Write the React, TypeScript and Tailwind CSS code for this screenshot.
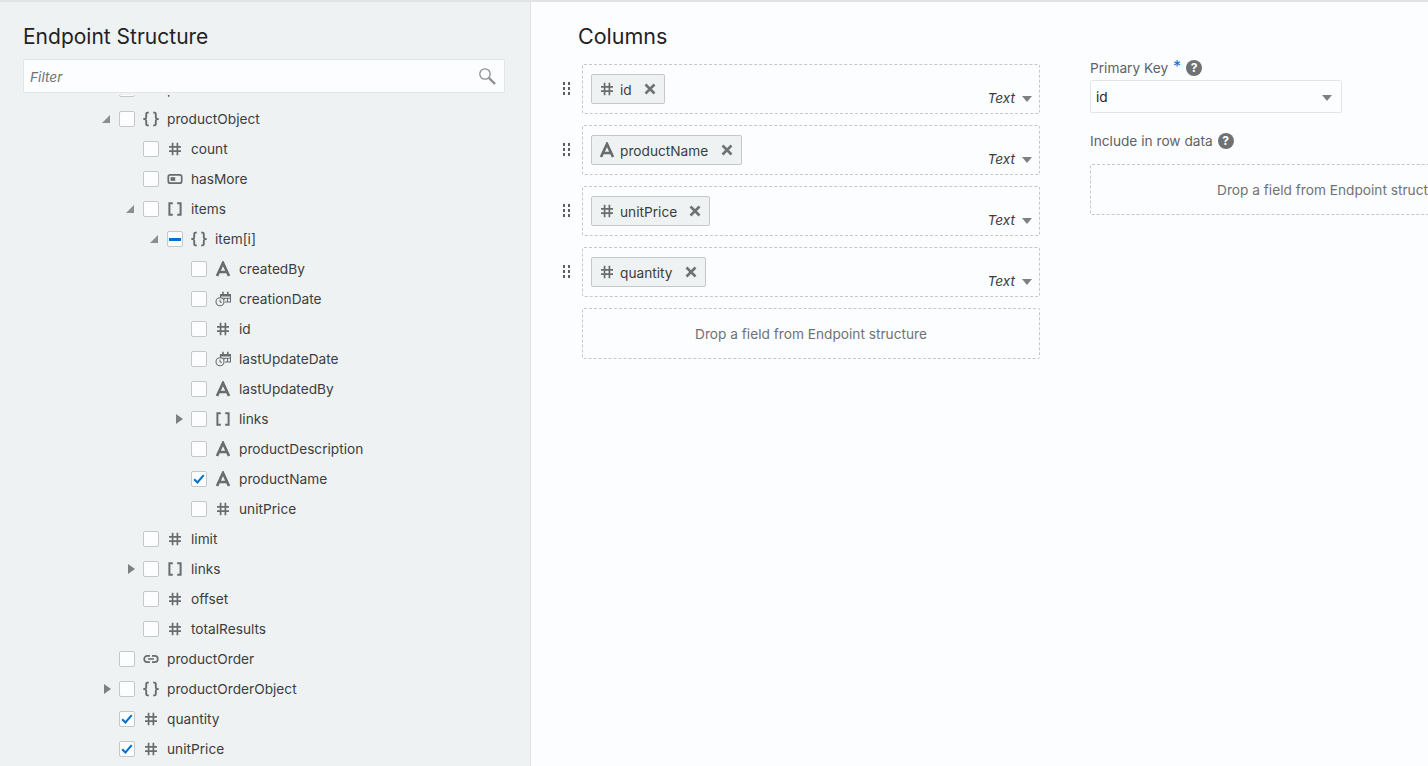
import React from 'react';

type IconKind = 'hash' | 'text' | 'object' | 'array' | 'bool' | 'date' | 'link';

interface TreeRow {
  label: string;
  icon: IconKind;
  depth: 0 | 1 | 2 | 3;
  arrow?: 'open' | 'closed';
  state?: 'checked' | 'partial';
}

const rows: TreeRow[] = [
  { label: 'product', icon: 'link', depth: 0 },
  { label: 'productObject', icon: 'object', depth: 0, arrow: 'open' },
  { label: 'count', icon: 'hash', depth: 1 },
  { label: 'hasMore', icon: 'bool', depth: 1 },
  { label: 'items', icon: 'array', depth: 1, arrow: 'open' },
  { label: 'item[i]', icon: 'object', depth: 2, arrow: 'open', state: 'partial' },
  { label: 'createdBy', icon: 'text', depth: 3 },
  { label: 'creationDate', icon: 'date', depth: 3 },
  { label: 'id', icon: 'hash', depth: 3 },
  { label: 'lastUpdateDate', icon: 'date', depth: 3 },
  { label: 'lastUpdatedBy', icon: 'text', depth: 3 },
  { label: 'links', icon: 'array', depth: 3, arrow: 'closed' },
  { label: 'productDescription', icon: 'text', depth: 3 },
  { label: 'productName', icon: 'text', depth: 3, state: 'checked' },
  { label: 'unitPrice', icon: 'hash', depth: 3 },
  { label: 'limit', icon: 'hash', depth: 1 },
  { label: 'links', icon: 'array', depth: 1, arrow: 'closed' },
  { label: 'offset', icon: 'hash', depth: 1 },
  { label: 'totalResults', icon: 'hash', depth: 1 },
  { label: 'productOrder', icon: 'link', depth: 0 },
  { label: 'productOrderObject', icon: 'object', depth: 0, arrow: 'closed' },
  { label: 'quantity', icon: 'hash', depth: 0, state: 'checked' },
  { label: 'unitPrice', icon: 'hash', depth: 0, state: 'checked' },
];

const indent = {
  0: 'pl-[101px]',
  1: 'pl-[125px]',
  2: 'pl-[149px]',
  3: 'pl-[173px]',
};

const columns: { label: string; icon: IconKind; width: string }[] = [
  { label: 'id', icon: 'hash', width: 'w-[74px]' },
  { label: 'productName', icon: 'text', width: 'w-[151px]' },
  { label: 'unitPrice', icon: 'hash', width: 'w-[119px]' },
  { label: 'quantity', icon: 'hash', width: 'w-[115px]' },
];

function TypeIcon({ kind }: { kind: IconKind }) {
  const stroke = { fill: 'none', stroke: '#6a6d6f', strokeWidth: 1.7 };
  return (
    <svg viewBox="0 0 16 16" className="w-4 h-4 shrink-0">
      {kind === 'hash' && (
        <path {...stroke} d="M5.6 1.8v12.4M10.4 1.8v12.4M2 5.8h12M2 10.2h12" />
      )}
      {kind === 'text' && (
        <path {...stroke} strokeWidth={2.7} d="M2 15 8 2l6 13M4.2 11h7.6" />
      )}
      {kind === 'object' && (
        <path
          {...stroke}
          strokeWidth={1.9}
          d="M5.8 1.6H4.4C3.5 1.6 3.2 2.2 3.2 3v3.2c0 1-.5 1.5-1.4 1.8.9.3 1.4.8 1.4 1.8V13c0 .8.3 1.4 1.2 1.4h1.4M10.2 1.6h1.4c.9 0 1.2.6 1.2 1.4v3.2c0 1 .5 1.5 1.4 1.8-.9.3-1.4.8-1.4 1.8V13c0 .8-.3 1.4-1.2 1.4h-1.4"
        />
      )}
      {kind === 'array' && (
        <path {...stroke} strokeWidth={2} d="M5.8 2.2H2.4v11.6h3.4M10.2 2.2h3.4v11.6h-3.4" />
      )}
      {kind === 'bool' && (
        <>
          <rect {...stroke} x="1.3" y="3.8" width="13.4" height="8.4" rx="2" />
          <rect x="3.6" y="6.2" width="4.6" height="3.6" fill="#6a6d6f" />
        </>
      )}
      {kind === 'date' && (
        <>
          <path
            fill="none"
            stroke="#6a6d6f"
            strokeWidth={1.1}
            d="M5.5 7V3.5h10V11H10M5.5 7.2h10M12.5 7.2V11M9.5 7.2v1.2"
          />
          <path fill="#6a6d6f" d="M5.5 3h10v2.6h-10zM7.2 0.8h1.6v2.4H7.2zM12 0.8h1.6v2.4H12z" />
          <circle fill="#eff2f3" stroke="#6a6d6f" strokeWidth={1.1} cx="5" cy="10.8" r="4" />
          <path fill="none" stroke="#6a6d6f" strokeWidth={1} d="M5 8.6v2.6h1.9" />
        </>
      )}
      {kind === 'link' && (
        <path
          {...stroke}
          d="M7 4.8H4.4a3.2 3.2 0 0 0 0 6.4H7M9 4.8h2.6a3.2 3.2 0 0 1 0 6.4H9M5 8h6"
        />
      )}
    </svg>
  );
}

function Arrow({ dir }: { dir?: 'open' | 'closed' }) {
  if (!dir) return <span className="w-[16px] shrink-0" />;
  return (
    <svg viewBox="0 0 16 16" className="w-[16px] h-[16px] shrink-0">
      {dir === 'open' ? (
        <path d="M1 12 9 4v8z" fill="#8b8e90" />
      ) : (
        <path d="M3 3l7 5-7 5z" fill="#7d8082" />
      )}
    </svg>
  );
}

function Checkbox({ state }: { state?: 'checked' | 'partial' }) {
  return (
    <span className="w-4 h-4 shrink-0 rounded-[2px] border border-[#c4c8ca] bg-[#fcfdfe] flex items-center justify-center">
      {state === 'checked' && (
        <svg viewBox="0 0 16 16" className="w-4 h-4">
          <path d="M2.5 8.3 6.2 12l7.2-8.5" fill="none" stroke="#0572ce" strokeWidth={2.4} />
        </svg>
      )}
      {state === 'partial' && <span className="w-3 h-[3px] bg-[#0572ce]" />}
    </span>
  );
}

function HelpIcon() {
  return (
    <span className="w-4 h-4 rounded-full bg-[#6f7274] text-white text-[12px] font-bold flex items-center justify-center leading-none">
      ?
    </span>
  );
}

function Caret() {
  return <span className="w-0 h-0 border-x-[5px] border-x-transparent border-t-[6px] border-t-[#7d8082]" />;
}

function DragHandle() {
  return (
    <span className="ml-[5px] -mt-[1px] w-[7px] grid grid-cols-2 gap-x-[3px] gap-y-[2px] shrink-0">
      {[0, 1, 2, 3, 4, 5].map((i) => (
        <span key={i} className="w-[2px] h-[3px] bg-[#5b5f61]" />
      ))}
    </span>
  );
}

function SearchIcon() {
  return (
    <svg viewBox="0 0 18 18" className="w-[18px] h-[18px]">
      <circle cx="7" cy="7" r="5.2" fill="none" stroke="#8b8e90" strokeWidth={1.3} />
      <path d="M11 11l6 6" stroke="#8b8e90" strokeWidth={2.4} fill="none" />
    </svg>
  );
}

export default function App() {
  return (
    <div className="w-[1428px] h-[766px] overflow-hidden flex border-t-2 border-[#e1e4e5] font-['Inter','Liberation_Sans',sans-serif] text-[13.7px] bg-[#fcfdfe]">
      {/* Endpoint structure panel */}
      <aside className="w-[531px] shrink-0 h-full bg-[#eff2f3] border-r border-[#e1e4e5] flex flex-col overflow-hidden">
        <h2 className="ml-[23px] mt-[21px] text-[21px] leading-[28px] text-[#1f2224]">Endpoint Structure</h2>
        <div className="ml-[23px] mr-[25px] mt-[8px] h-[34px] shrink-0 flex items-center justify-between pl-[6px] pr-[8px] bg-[#fcfdfe] border border-[#e3e6e7] rounded-[2px] relative z-10">
          <span className="italic text-[#6f7274] pt-[2px]">Filter</span>
          <SearchIcon />
        </div>
        <div className="flex-1 mt-[2px] overflow-hidden">
          <div className="-mt-[21px]">
            {rows.map((row, i) => (
              <div key={i} className={`h-[30px] flex items-center ${indent[row.depth]}`}>
                <Arrow dir={row.arrow} />
                <span className="w-[2px] shrink-0" />
                <Checkbox state={row.state} />
                <span className="w-[8px] shrink-0" />
                <TypeIcon kind={row.icon} />
                <span className="ml-[8px] text-[#3b3e40]">{row.label}</span>
              </div>
            ))}
          </div>
        </div>
      </aside>

      {/* Columns */}
      <main className="flex-1 flex pl-[27px] min-w-0">
        <section className="w-[482px] shrink-0">
          <h2 className="ml-[20px] mt-[20px] text-[21.5px] leading-[28px] text-[#1f2224]">Columns</h2>
          <div className="mt-[14px] flex flex-col gap-[11px]">
            {columns.map((col) => (
              <div key={col.label} className="flex items-center gap-[12px]">
                <DragHandle />
                <div className="flex-1 h-[50px] border border-dashed border-[#c4c8ca] rounded-[2px] flex justify-between pl-[8px] pr-[7px]">
                  <div className={`${col.width} h-[30px] mt-[9px] flex items-center pl-[7px] bg-[#eff2f3] border border-[#c4c8ca] rounded-[2px]`}>
                    <TypeIcon kind={col.icon} />
                    <span className="ml-[5px] pt-[2px] text-[#3b3e40]">{col.label}</span>
                    <svg viewBox="0 0 12 12" className="w-3 h-3 ml-auto mr-[8px]">
                      <path d="M1.5 1.5l9 9M10.5 1.5l-9 9" stroke="#6f7274" strokeWidth={2.6} fill="none" />
                    </svg>
                  </div>
                  <div className="self-end mb-[4px] flex items-center gap-[7px]">
                    <span className="italic text-[#3b3e40]">Text</span>
                    <Caret />
                  </div>
                </div>
              </div>
            ))}
            <div className="ml-[24px] h-[51px] pt-[2px] border border-dashed border-[#c4c8ca] rounded-[2px] flex items-center justify-center text-[#6f7274]">
              Drop a field from Endpoint structure
            </div>
          </div>
        </section>

        {/* Row data settings */}
        <section className="ml-[50px] w-[486px] shrink-0 pt-[56px]">
          <div className="h-[20px] flex items-center text-[#5f6264]">
            Primary Key
            <span className="ml-[5px] text-[#0572ce] text-[16px] leading-none -mt-[4px]">*</span>
            <span className="ml-[5px]"><HelpIcon /></span>
          </div>
          <div className="mt-[2px] w-[252px] h-[33px] pt-[2px] border border-[#e3e6e7] rounded-[2px] flex items-center justify-between pl-[5px] pr-[9px] text-[#1f2224]">
            id
            <Caret />
          </div>
          <div className="mt-[18px] h-[20px] flex items-center text-[#5f6264]">
            Include in row data
            <span className="ml-[5px]"><HelpIcon /></span>
          </div>
          <div className="mt-[13px] h-[51px] pt-[2px] border border-dashed border-[#c4c8ca] rounded-[2px] flex items-center justify-center text-[#6f7274]">
            Drop a field from Endpoint structure
          </div>
        </section>
      </main>
    </div>
  );
}
